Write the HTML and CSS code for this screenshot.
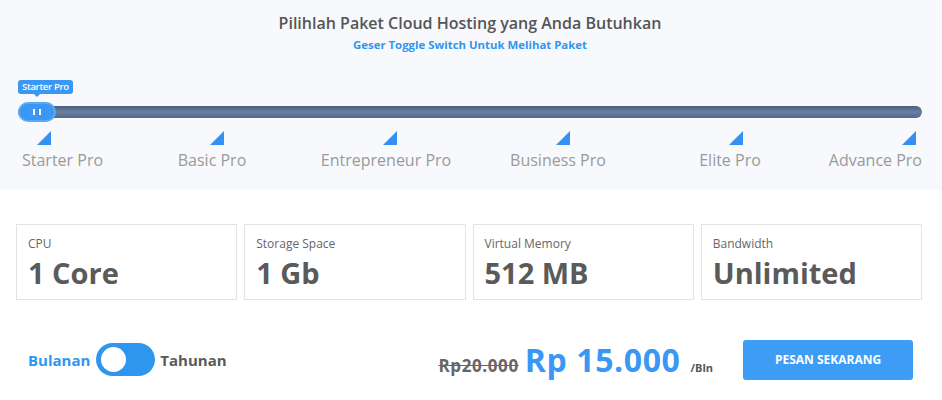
FILE: index.html
```html
<!DOCTYPE html>
<html lang="id">
<head>
<meta charset="utf-8">
<link rel="stylesheet" href="styles.css">
</head>
<body>
<section class="chooser">
  <h1 class="title">Pilihlah Paket Cloud Hosting yang Anda Butuhkan</h1>
  <p class="subtitle">Geser Toggle Switch Untuk Melihat Paket</p>
  <div class="slider">
    <div class="tip">Starter Pro</div>
    <div class="track">
      <div class="handle"><span></span><span></span></div>
    </div>
    <div class="ticks">
      <div class="tick"></div>
      <div class="tick"></div>
      <div class="tick"></div>
      <div class="tick"></div>
      <div class="tick"></div>
      <div class="tick"></div>
    </div>
    <div class="labels">
      <span class="lbl lbl-first">Starter Pro</span>
      <span class="lbl" style="left:194px">Basic Pro</span>
      <span class="lbl" style="left:368px">Entrepreneur Pro</span>
      <span class="lbl" style="left:540px">Business Pro</span>
      <span class="lbl" style="left:712px">Elite Pro</span>
      <span class="lbl lbl-last">Advance Pro</span>
    </div>
  </div>
</section>
<section class="specs">
  <div class="card"><div class="card-label">CPU</div><div class="card-value">1 Core</div></div>
  <div class="card"><div class="card-label">Storage Space</div><div class="card-value">1 Gb</div></div>
  <div class="card"><div class="card-label">Virtual Memory</div><div class="card-value">512 MB</div></div>
  <div class="card"><div class="card-label">Bandwidth</div><div class="card-value">Unlimited</div></div>
</section>
<section class="order">
  <div class="period">
    <span class="per-on">Bulanan</span>
    <span class="switch"><span class="knob"></span></span>
    <span class="per-off">Tahunan</span>
  </div>
  <div class="price">
    <span class="old">Rp20.000</span>
    <span class="new">Rp 15.000</span>
    <span class="unit">/Bln</span>
  </div>
  <button class="buy">PESAN SEKARANG</button>
</section>
</body>
</html>
```
FILE: styles.css
```css
* { box-sizing: border-box; }
html, body { margin: 0; padding: 0; background: #fff; }
body {
  width: 942px;
  font-family: "Open Sans", "Noto Sans", sans-serif;
  color: #555;
}
.chooser {
  background: #f7f9fc;
  padding: 12px 20px 0 18px;
  height: 190px;
}
.title {
  margin: 0;
  text-align: center;
  font-size: 16px;
  font-weight: 600;
  color: #555;
  line-height: 22px;
}
.subtitle {
  margin: 3px 0 0;
  text-align: center;
  font-size: 11.4px;
  font-weight: 700;
  color: #2f96f0;
  line-height: 16px;
}
.slider {
  position: relative;
  margin-top: 20px;
}
.tip {
  display: inline-block;
  background: #3a97f3;
  color: #fff;
  font-size: 9.5px;
  font-weight: 600;
  line-height: 14px;
  padding: 0 4px;
  border-radius: 3px;
  position: relative;
  letter-spacing: -0.3px;
}
.tip::after {
  content: "";
  position: absolute;
  left: 16px;
  bottom: -3px;
  border-left: 3px solid transparent;
  border-right: 3px solid transparent;
  border-top: 3px solid #3a97f3;
}
.track {
  position: relative;
  margin-top: 11px;
  height: 12px;
  border-radius: 6px;
  background: linear-gradient(#4a5d7e, #6a80a3 50%, #53678a);
}
.handle {
  position: absolute;
  left: 0;
  top: -4px;
  width: 38px;
  height: 20px;
  border-radius: 10px;
  background: #3a97f3;
  border: 2px solid #5aaaf6;
  display: flex;
  justify-content: center;
  align-items: center;
  gap: 4px;
}
.handle span {
  width: 2px;
  height: 6px;
  background: #fff;
}
.ticks {
  display: flex;
  justify-content: space-between;
  padding: 0 6px 0 19px;
  margin-top: 13px;
}
.tick {
  width: 0;
  height: 0;
  border-left: 14px solid transparent;
  border-bottom: 14px solid #3391f5;
}
.labels {
  position: relative;
  height: 24px;
  margin-top: 3px;
}
.lbl {
  position: absolute;
  top: 0;
  transform: translateX(-50%);
  font-size: 16px;
  color: #9a9a9a;
  white-space: nowrap;
  line-height: 24px;
}
.lbl-first { left: 4px; transform: none; }
.lbl-last { left: auto; right: 0; transform: none; }
.specs {
  display: flex;
  gap: 7px;
  padding: 34px 20px 0 16px;
}
.card {
  flex: 1;
  height: 76px;
  border: 1px solid #e3e3e3;
  padding: 10px 11px 0;
}
.card-label {
  font-size: 12px;
  color: #666;
  line-height: 18px;
}
.card-value {
  font-size: 29px;
  font-weight: 700;
  color: #5a5a5a;
  line-height: 40px;
}
.order {
  display: flex;
  align-items: center;
  padding: 38px 29px 0 28px;
}
.period {
  display: flex;
  align-items: center;
  gap: 5px;
  font-size: 15px;
  font-weight: 700;
}
.per-on { color: #2f96f0; }
.per-off { color: #5a5a5a; }
.switch {
  width: 59px;
  height: 33px;
  border-radius: 17px;
  background: #2f96f0;
  display: flex;
  align-items: center;
  padding-left: 5px;
  margin-left: 1px;
}
.knob {
  width: 25px;
  height: 25px;
  border-radius: 50%;
  background: #fff;
}
.price {
  margin-left: auto;
  display: flex;
  align-items: baseline;
  gap: 6px;
  margin-right: 30px;
}
.old {
  font-size: 17px;
  font-weight: 700;
  color: #666;
  letter-spacing: 0.6px;
  text-decoration: line-through;
}
.new {
  font-size: 32px;
  font-weight: 700;
  color: #3a97f3;
  letter-spacing: 0.6px;
  margin-right: 4px;
}
.unit {
  font-size: 11px;
  font-weight: 700;
  color: #555;
}
.buy {
  width: 170px;
  height: 40px;
  border: 0;
  border-radius: 3px;
  background: #3d9cf5;
  color: #fff;
  font-family: inherit;
  font-size: 12px;
  font-weight: 700;
}
```
